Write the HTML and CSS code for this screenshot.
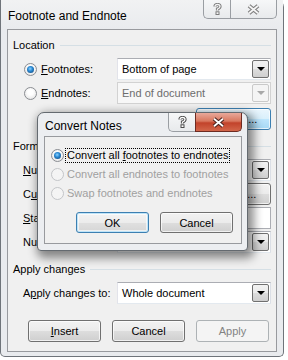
FILE: index.html
```html
<!DOCTYPE html>
<html lang="en">
<head>
    <meta charset="UTF-8">
    <title>Footnote and Endnote</title>
    <link rel="stylesheet" href="styles.css">
</head>
<body>
    <div class="window">
        <div class="titlebar">
            <span class="title">Footnote and Endnote</span>
            <div class="caption">
                <div class="cap-btn cap-help">
                    <svg width="9" height="12" viewBox="0 0 9 12"><path d="M2 3.6 Q2 1.5 4.5 1.5 Q7 1.5 7 3.6 Q7 5.2 4.5 6 L4.5 7.6" fill="none" stroke="#7c7c7c" stroke-width="3.2"/><path d="M2 3.6 Q2 1.5 4.5 1.5 Q7 1.5 7 3.6 Q7 5.2 4.5 6 L4.5 7.6" fill="none" stroke="#f4f4f4" stroke-width="1.3"/><rect x="3" y="8.8" width="3" height="2.7" fill="#f4f4f4" stroke="#7c7c7c"/></svg>
                </div>
                <div class="cap-btn cap-close">
                    <svg width="13" height="11" viewBox="0 0 13 11"><path d="M2 1.8 L11 9.2 M11 1.8 L2 9.2" stroke="#7c7c7c" stroke-width="4"/><path d="M2 1.8 L11 9.2 M11 1.8 L2 9.2" stroke="#f4f4f4" stroke-width="1.8"/></svg>
                </div>
            </div>
        </div>

        <div class="client">
            <div class="group-head"><span>Location</span><div class="line"></div></div>
            <div class="row first">
                <div class="opt"><span class="radio checked"></span><span><u>F</u>ootnotes:</span></div>
                <div class="select"><span class="value">Bottom of page</span><span class="drop"><i></i></span></div>
            </div>
            <div class="row">
                <div class="opt"><span class="radio"></span><span><u>E</u>ndnotes:</span></div>
                <div class="select disabled"><span class="value">End of document</span><span class="drop"><i></i></span></div>
            </div>
            <div class="row right">
                <button class="button hot">C<u>o</u>nvert...</button>
            </div>

            <div class="group-head section"><span>Format</span><div class="line"></div></div>
            <div class="row first">
                <span><u>N</u>umber format:</span>
                <div class="select"><span class="value">1, 2, 3, ...</span><span class="drop"><i></i></span></div>
            </div>
            <div class="row">
                <span>C<u>u</u>stom mark:</span>
                <div class="pair"><div class="field"></div><button class="button small">Symbol...</button></div>
            </div>
            <div class="row">
                <span><u>S</u>tart at:</span>
                <div class="field spin">1</div>
            </div>
            <div class="row">
                <span>Nu<u>m</u>bering:</span>
                <div class="select"><span class="value">Continuous</span><span class="drop"><i></i></span></div>
            </div>

            <div class="group-head section"><span>Apply changes</span><div class="line"></div></div>
            <div class="row first">
                <span>A<u>p</u>ply changes to:</span>
                <div class="select"><span class="value">Whole document</span><span class="drop"><i></i></span></div>
            </div>
            <div class="buttons">
                <button class="button"><u>I</u>nsert</button>
                <button class="button">Cancel</button>
                <button class="button" disabled>Apply</button>
            </div>
        </div>

        <div class="modal">
            <div class="modal-title">
                <span class="title">Convert Notes</span>
                <div class="caption">
                    <div class="cap-btn cap-help">
                        <svg width="9" height="12" viewBox="0 0 9 12"><path d="M2 3.6 Q2 1.5 4.5 1.5 Q7 1.5 7 3.6 Q7 5.2 4.5 6 L4.5 7.6" fill="none" stroke="#4a4a4a" stroke-width="3.2"/><path d="M2 3.6 Q2 1.5 4.5 1.5 Q7 1.5 7 3.6 Q7 5.2 4.5 6 L4.5 7.6" fill="none" stroke="#ffffff" stroke-width="1.3"/><rect x="3" y="8.8" width="3" height="2.7" fill="#ffffff" stroke="#4a4a4a"/></svg>
                    </div>
                    <div class="cap-btn cap-close active">
                        <svg width="13" height="11" viewBox="0 0 13 11"><path d="M2 1.8 L11 9.2 M11 1.8 L2 9.2" stroke="#4b2420" stroke-width="4"/><path d="M2 1.8 L11 9.2 M11 1.8 L2 9.2" stroke="#ffffff" stroke-width="1.8"/></svg>
                    </div>
                </div>
            </div>
            <div class="modal-client">
                <div class="mrow"><span class="radio checked"></span><span class="focus">Convert all <u>f</u>ootnotes to endnotes</span></div>
                <div class="mrow off"><span class="radio"></span><span class="nofocus">Convert all endnotes to footnotes</span></div>
                <div class="mrow off"><span class="radio"></span><span class="nofocus">Swap footnotes and endnotes</span></div>
                <div class="mbuttons">
                    <button class="button default">OK</button>
                    <button class="button">Cancel</button>
                </div>
            </div>
        </div>
    </div>
</body>
</html>
```

FILE: styles.css
```css
* {
    box-sizing: border-box;
}
body {
    margin: 0;
    background: #ffffff;
    font-family: "Liberation Sans", Arial, sans-serif;
    font-size: 11px;
    color: #000000;
    white-space: nowrap;
    overflow: hidden;
}
u {
    text-decoration: underline;
    text-underline-offset: 1px;
}
.window {
    position: relative;
    width: 284px;
    height: 357px;
    background: #e9ebee;
    border: 1px solid #6f747a;
    border-top: none;
    border-radius: 0 7px 5px 5px;
}
.titlebar {
    position: relative;
    height: 29px;
    background: linear-gradient(#f1f2f3, #e9ebee);
}
.title {
    position: absolute;
    left: 7px;
    top: 8px;
    font-size: 12px;
    line-height: 16px;
}
.caption {
    position: absolute;
    top: 0;
    right: 6px;
    display: flex;
}
.cap-btn {
    height: 19px;
    display: flex;
    align-items: center;
    justify-content: center;
    border: 1px solid #9a9ea3;
    border-top: none;
    background: linear-gradient(#f6f7f8, #e8eaec);
}
.cap-help {
    width: 27px;
    border-right: none;
    border-radius: 0 0 0 5px;
}
.cap-close {
    width: 47px;
    border-radius: 0 0 5px 0;
}
.cap-close.active {
    border-color: #6d2b22;
    background: linear-gradient(#e9a99b 0%, #d8785f 45%, #c2432b 55%, #d2664a 100%);
}

.client {
    margin: 0 6px;
    height: 323px;
    background: #f0f0f0;
    border: 1px solid #989a9e;
    padding: 8px 5px 0 5px;
}
.group-head {
    display: flex;
    align-items: center;
    height: 14px;
    gap: 5px;
}
.group-head .line {
    flex: 1;
    height: 1px;
    background: #d5dfe5;
}
.group-head.section {
    margin-top: 9px;
}
.row {
    display: flex;
    justify-content: space-between;
    align-items: center;
    height: 22px;
    margin-top: 2px;
    padding-left: 10px;
}
.row.first {
    margin-top: 6px;
}
.row.right {
    justify-content: flex-end;
    margin-top: 4px;
}
.opt {
    display: flex;
    align-items: center;
    gap: 4px;
    margin-left: 1px;
}
.radio {
    width: 13px;
    height: 13px;
    border-radius: 50%;
    border: 1px solid #8a8d92;
    background: radial-gradient(circle at 50% 40%, #ffffff 30%, #dcdcdc 100%);
    display: inline-flex;
    align-items: center;
    justify-content: center;
    flex: none;
}
.radio.checked::after {
    content: "";
    width: 7px;
    height: 7px;
    border-radius: 50%;
    background: radial-gradient(circle at 45% 40%, #8fd3ff 0%, #2a8ad4 40%, #0d3a6a 100%);
}
.select {
    width: 154px;
    height: 22px;
    background: #ffffff;
    border: 1px solid;
    border-color: #abadb3 #dbdfe6 #e3e9ef #e2e3ea;
    display: flex;
    align-items: center;
    justify-content: space-between;
    padding-left: 4px;
}
.select .drop {
    width: 17px;
    height: 18px;
    margin-right: 1px;
    border: 1px solid #707070;
    border-radius: 2px;
    background: linear-gradient(#f2f2f2 0%, #ebebeb 50%, #dddddd 51%, #cfcfcf 100%);
    display: flex;
    align-items: center;
    justify-content: center;
}
.select .drop i {
    width: 0;
    height: 0;
    border-left: 4px solid transparent;
    border-right: 4px solid transparent;
    border-top: 4px solid #000000;
}
.select.disabled {
    background: #f7f7f7;
    border-color: #d2d2d2;
    color: #6d6d6d;
}
.select.disabled .drop {
    border-color: #c9c9c9;
    background: #f4f4f4;
}
.select.disabled .drop i {
    border-top-color: #a8a8a8;
}
.field {
    height: 22px;
    width: 76px;
    background: #ffffff;
    border: 1px solid #abadb3;
    padding-left: 3px;
    line-height: 20px;
}
.field.spin {
    width: 60px;
}
.pair {
    display: flex;
    gap: 3px;
}
.button {
    width: 73px;
    height: 22px;
    font-family: inherit;
    font-size: 11px;
    color: #000000;
    border: 1px solid #707070;
    border-radius: 3px;
    background: linear-gradient(#f2f2f2 0%, #ebebeb 50%, #dddddd 51%, #cfcfcf 100%);
    box-shadow: inset 0 0 0 1px rgba(255, 255, 255, 0.7);
    padding: 0;
}
.button.hot,
.button.small {
    width: 75px;
}
.button.hot {
    border-color: #3c7fb1;
    background: linear-gradient(#eaf6fd 0%, #d9f0fc 50%, #bee6fd 51%, #a7d9f5 100%);
}
.button.default {
    border-color: #3c7fb1;
    box-shadow: inset 0 0 0 1px #bfe4f8, inset 0 0 0 2px rgba(255, 255, 255, 0.6);
    background: linear-gradient(#f3f3f3 0%, #ececec 50%, #e0e0e0 51%, #d6d6d6 100%);
}
.button:disabled {
    border-color: #adb2b5;
    background: #f4f4f4;
    color: #838383;
    box-shadow: none;
}
.buttons {
    display: flex;
    justify-content: flex-end;
    gap: 11px;
    margin-top: 16px;
    padding-right: 2px;
}

.modal {
    position: absolute;
    left: 36px;
    top: 112px;
    width: 211px;
    height: 139px;
    background: #eceef1;
    border: 1px solid #646a70;
    border-radius: 7px 7px 4px 4px;
    box-shadow: 3px 4px 10px 3px rgba(0, 0, 0, 0.45);
}
.modal-title {
    position: relative;
    height: 23px;
}
.modal-title .title {
    top: 5px;
}
.modal-title .caption {
    right: 5px;
}
.modal-client {
    margin: 0 5px 0 6px;
    height: 108px;
    background: #f0f0f0;
    border: 1px solid #989a9e;
    padding: 11px 0 0 6px;
}
.mrow {
    display: flex;
    align-items: center;
    height: 15px;
    margin-bottom: 4px;
}
.mrow .radio {
    margin-right: 1px;
}
.focus,
.nofocus {
    border: 1px dotted #000000;
    padding: 0 1px;
    line-height: 13px;
}
.nofocus {
    border-color: transparent;
}
.mrow.off {
    color: #a0a0a0;
}
.mrow.off .radio {
    border-color: #c3c5c8;
    background: #f4f4f4;
}
.mbuttons {
    display: flex;
    justify-content: flex-end;
    gap: 11px;
    margin-top: 11px;
    padding-right: 8px;
}
.mbuttons .button {
    height: 21px;
}
```
